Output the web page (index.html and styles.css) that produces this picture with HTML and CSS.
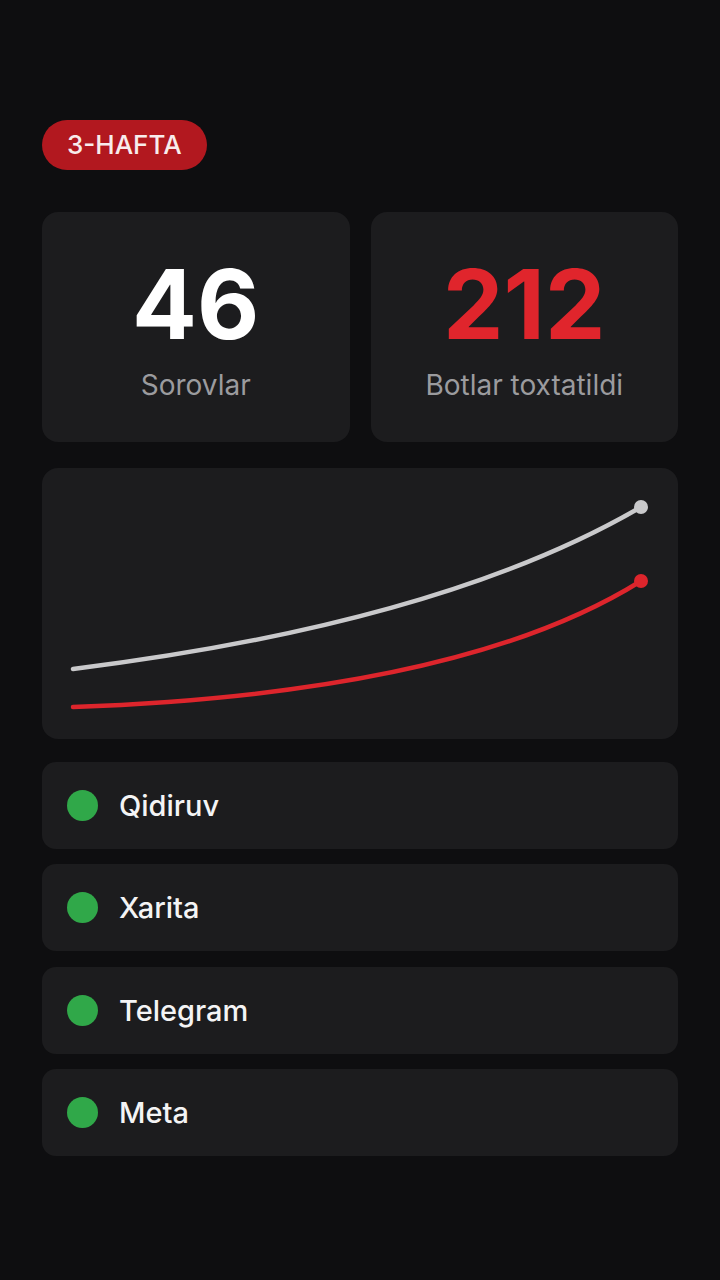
FILE: index.html
```html
<!DOCTYPE html>
<html lang="uz">
<head>
    <meta charset="UTF-8">
    <meta name="viewport" content="width=device-width, initial-scale=1.0">
    <title>3-hafta hisoboti</title>
    <link rel="stylesheet" href="styles.css">
</head>
<body>
    <div class="page">
        <span class="badge">3-HAFTA</span>

        <div class="stats">
            <div class="stat-card">
                <div class="stat-value">46</div>
                <div class="stat-label">Sorovlar</div>
            </div>
            <div class="stat-card">
                <div class="stat-value red">212</div>
                <div class="stat-label">Botlar toxtatildi</div>
            </div>
        </div>

        <div class="chart-card">
            <svg class="chart" viewBox="0 0 636 271" width="636" height="271">
                <path d="M31 201 Q400 155 599 39" fill="none" stroke="#c9c9cb" stroke-width="4.5" stroke-linecap="round"/>
                <circle cx="599" cy="39" r="7" fill="#c9c9cb"/>
                <path d="M31 239 Q420 225 599 113" fill="none" stroke="#dd252c" stroke-width="4.5" stroke-linecap="round"/>
                <circle cx="599" cy="113" r="7" fill="#dd252c"/>
            </svg>
        </div>

        <ul class="sources">
            <li class="source"><span class="dot"></span>Qidiruv</li>
            <li class="source"><span class="dot"></span>Xarita</li>
            <li class="source"><span class="dot"></span>Telegram</li>
            <li class="source"><span class="dot"></span>Meta</li>
        </ul>
    </div>
</body>
</html>
```

FILE: styles.css
```css
body {
    margin: 0;
    background-color: #0e0e10;
    font-family: Inter, "Noto Sans", sans-serif;
    color: #f4f4f5;
}
.page {
    padding: 120px 42px 0;
}
.badge {
    display: inline-block;
    height: 50px;
    line-height: 50px;
    padding: 0 25px;
    border-radius: 25px;
    background-color: #b2181f;
    color: #f8ecec;
    font-size: 26px;
    font-weight: 500;
}
.stats {
    display: grid;
    grid-template-columns: 1fr 1fr;
    gap: 21px;
    margin-top: 42px;
}
.stat-card {
    height: 230px;
    background-color: #1c1c1e;
    border-radius: 16px;
    display: flex;
    flex-direction: column;
    align-items: center;
    justify-content: center;
    gap: 19px;
}
.stat-value {
    font-size: 96px;
    font-weight: 700;
    line-height: 1;
    color: #ffffff;
}
.stat-value.red {
    color: #e0252c;
}
.stat-label {
    font-size: 28px;
    line-height: 1;
    color: #9b9b9e;
}
.chart-card {
    margin-top: 26px;
    height: 271px;
    background-color: #1c1c1e;
    border-radius: 16px;
}
.chart {
    display: block;
}
.sources {
    list-style: none;
    margin: 23px 0 0;
    padding: 0;
    display: flex;
    flex-direction: column;
    gap: 15.4px;
}
.source {
    height: 87px;
    background-color: #1c1c1e;
    border-radius: 14px;
    display: flex;
    align-items: center;
    padding-left: 25px;
    font-size: 29px;
    font-weight: 500;
}
.dot {
    width: 31px;
    height: 31px;
    border-radius: 50%;
    background-color: #30a849;
    margin-right: 21px;
}
```
